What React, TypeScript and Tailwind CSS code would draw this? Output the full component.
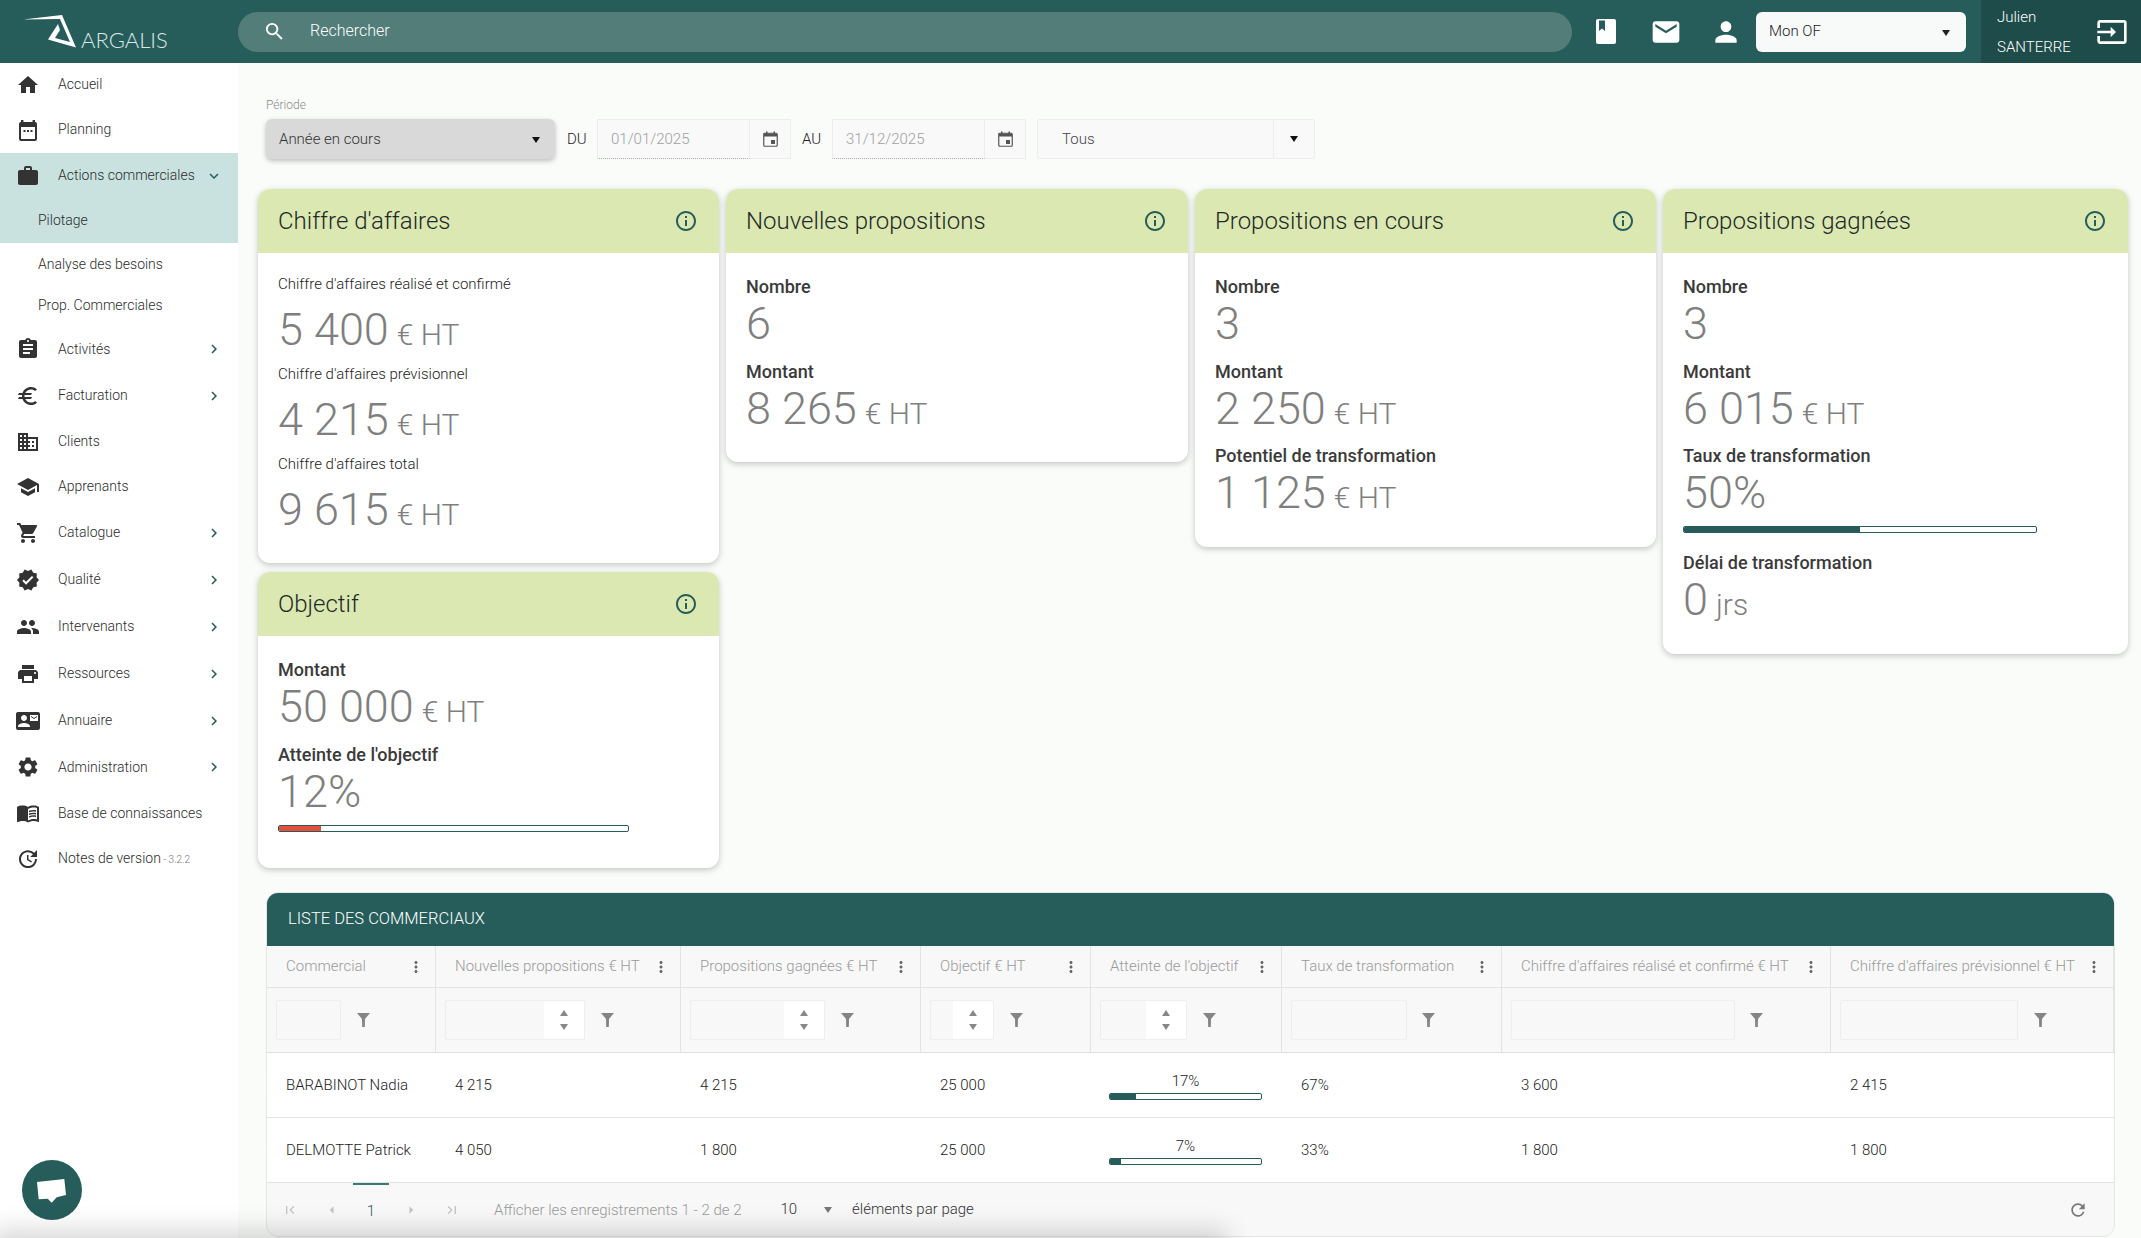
import React from "react";
import {
  MdHome, MdWork, MdAssignment, MdEuro, MdDomain, MdSchool, MdShoppingCart, MdVerified, MdPeople, MdPrint,
  MdContactMail, MdSettings, MdMenuBook, MdUpdate, MdEmail, MdPerson, MdInput, MdInfoOutline, MdSearch, MdMoreVert,
  MdChevronRight, MdExpandMore, MdRefresh, MdFirstPage, MdLastPage, MdArrowDropUp, MdArrowDropDown,
} from "react-icons/md";

const F = "font-['Roboto','Liberation_Sans',sans-serif]";

function PlanningIcon({ className = "" }: { className?: string }) {
  return (
    <svg width="24" height="24" viewBox="0 0 24 24" className={className}>
      <path d="M5 2h2.4v2h9.2V2H19v2h.2A2 2 0 0 1 21 6v15a2 2 0 0 1-2 2H5a2 2 0 0 1-2-2V6a2 2 0 0 1 2-2z" fill="currentColor" />
      <rect x="5" y="9" width="14" height="12" fill="#ffffff" />
      <rect x="7.5" y="12" width="2" height="2" fill="currentColor" />
      <rect x="11" y="12" width="2" height="2" fill="currentColor" />
      <rect x="14.5" y="12" width="2" height="2" fill="currentColor" />
    </svg>
  );
}

const menu: { label: string; Icon?: any; h: string; chev?: "r" | "d"; sub?: boolean; active?: boolean; extra?: string }[] = [
  { label: "Accueil", Icon: MdHome, h: "h-[43px]" },
  { label: "Planning", Icon: PlanningIcon, h: "h-[47px]" },
  { label: "Actions commerciales", Icon: MdWork, h: "h-[45px]", chev: "d", active: true },
  { label: "Pilotage", h: "h-[45px]", sub: true, active: true },
  { label: "Analyse des besoins", h: "h-[42px]", sub: true },
  { label: "Prop. Commerciales", h: "h-[41px]", sub: true },
  { label: "Activités", Icon: MdAssignment, h: "h-[46px]", chev: "r" },
  { label: "Facturation", Icon: MdEuro, h: "h-[47px]", chev: "r" },
  { label: "Clients", Icon: MdDomain, h: "h-[45px]" },
  { label: "Apprenants", Icon: MdSchool, h: "h-[45px]" },
  { label: "Catalogue", Icon: MdShoppingCart, h: "h-[47px]", chev: "r" },
  { label: "Qualité", Icon: MdVerified, h: "h-[47px]", chev: "r" },
  { label: "Intervenants", Icon: MdPeople, h: "h-[47px]", chev: "r" },
  { label: "Ressources", Icon: MdPrint, h: "h-[47px]", chev: "r" },
  { label: "Annuaire", Icon: MdContactMail, h: "h-[47px]", chev: "r" },
  { label: "Administration", Icon: MdSettings, h: "h-[46px]", chev: "r" },
  { label: "Base de connaissances", Icon: MdMenuBook, h: "h-[46px]" },
  { label: "Notes de version", Icon: MdUpdate, h: "h-[45px]", extra: "- 3.2.2" },
];

function Caret({ className = "" }: { className?: string }) {
  return (
    <svg width="8" height="6" viewBox="0 0 8 6" className={className}>
      <polygon points="0,0 8,0 4,6" fill="currentColor" />
    </svg>
  );
}

function Funnel() {
  return (
    <svg width="13" height="14" viewBox="0 0 13 14" className="shrink-0">
      <polygon points="0,0 13,0 8,6 7.8,14 5.2,14 5,6" fill="#858585" />
    </svg>
  );
}

function DateIcon() {
  return (
    <svg width="15" height="16" viewBox="0 0 15 16">
      <rect x="0.75" y="2.25" width="13.5" height="13" rx="1" fill="none" stroke="#555555" strokeWidth="1.2" />
      <rect x="1" y="2.5" width="13" height="3" fill="#555555" />
      <rect x="3" y="0.5" width="1.5" height="3" fill="#555555" />
      <rect x="10.5" y="0.5" width="1.5" height="3" fill="#555555" />
      <rect x="8" y="9" width="4" height="4" fill="#555555" />
    </svg>
  );
}

function BookIcon() {
  return (
    <svg width="20" height="25" viewBox="0 0 20 25">
      <rect width="20" height="25" rx="2" fill="#ffffff" />
      <polygon points="3,1.5 9,1.5 9,12 6,9.5 3,12" fill="#265d5b" />
    </svg>
  );
}

function Sidebar() {
  return (
    <aside className="w-[238px] shrink-0 bg-white relative">
      {menu.map((m) => (
        <div key={m.label} className={`${m.h} flex items-center relative ${m.active ? "bg-[#c9e2df]" : ""}`}>
          {m.Icon && <m.Icon className="absolute left-[16px] top-1/2 -translate-y-1/2 text-[#333333]" size={24} />}
          <span className={`${m.sub ? "ml-[38px]" : "ml-[58px]"} text-[14px] font-light text-[#2c2c2c] whitespace-nowrap`}>
            {m.label}
            {m.extra && <span className="text-[10px] text-[#777777]"> {m.extra}</span>}
          </span>
          {m.chev === "r" && <MdChevronRight className="absolute left-[205px] text-[#265d5b]" size={18} />}
          {m.chev === "d" && <MdExpandMore className="absolute left-[205px] text-[#265d5b]" size={18} />}
        </div>
      ))}
      <div className="absolute left-[22px] top-[1097px] w-[60px] h-[60px] rounded-full bg-[#265d5b] flex items-center justify-center">
        <svg width="30" height="26" viewBox="0 0 30 26">
          <polygon points="0,5 27.3,2 29,18 19.7,20.3 14.7,25.7 10.7,21.7 1.7,22.3" fill="#ffffff" />
        </svg>
      </div>
    </aside>
  );
}

function Header() {
  return (
    <header className="h-[63px] shrink-0 bg-[#265d5b] flex items-center text-white">
      <div className="w-[238px] shrink-0 h-full relative">
        <svg width="80" height="50" viewBox="0 0 80 50" className="absolute left-0 top-0">
          <polygon points="23,19.5 62,15 76,47.5 48,39.5 58,24 60,30 55,38 70,42 60,19" fill="#ffffff" />
        </svg>
        <span className="absolute left-[81px] top-[27px] font-['Lato',sans-serif] font-light text-[22px] leading-[26px] text-[#dbe8e6]">ARGALIS</span>
      </div>
      <div className="w-[1334px] h-[40px] rounded-[20px] bg-[#527d79] flex items-center pl-[25px]">
        <MdSearch size={23} className="text-white" />
        <span className="ml-[24px] -mt-[1px] text-[16px] font-light">Rechercher</span>
      </div>
      <div className="w-[50px] flex justify-end pr-[6px]"><BookIcon /></div>
      <div className="w-[60px] flex justify-end"><MdEmail size={32} /></div>
      <div className="w-[60px] flex justify-end"><MdPerson size={32} /></div>
      <div className="ml-[14px] w-[210px] h-[40px] rounded-[6px] bg-[#f8f9f9] flex items-center justify-between pl-[13px] pr-[16px] text-[#222222]">
        <span className="text-[15px] font-light">Mon OF</span>
        <Caret className="mt-[2px]" />
      </div>
      <div className="ml-[15px] flex-1 h-full bg-[#1e4c4a] flex items-center justify-between pl-[16px] pr-[13px]">
        <div className="text-[15px] font-light leading-[30px]">
          <div>Julien</div>
          <div>SANTERRE</div>
        </div>
        <MdInput size={32} />
      </div>
    </header>
  );
}

function DateField({ value }: { value: string }) {
  return (
    <div className="w-[194px] h-[40px] bg-[#f8f9f8] flex items-stretch">
      <div className="w-[153px] border border-[#ededed] border-b-[#aaaaaa] [border-bottom-style:dotted] flex items-center pl-[13px]">
        <span className="text-[15px] font-light text-[#a0a0a0]">{value}</span>
      </div>
      <div className="flex-1 border border-l-0 border-[#ededed] flex items-center justify-center">
        <DateIcon />
      </div>
    </div>
  );
}

function Filters() {
  return (
    <div>
      <div className="ml-[28px] mt-[1px] text-[12px] font-light text-[#8a8a8a] leading-[14px]">Période</div>
      <div className="flex items-center mt-[7px] ml-[28px] h-[40px]">
        <div className="w-[289px] h-[40px] rounded-[6px] bg-[#d9d9d9] shadow-[0_2px_5px_rgba(0,0,0,0.25)] flex items-center justify-between pl-[13px] pr-[15px] text-[#333333]">
          <span className="text-[15px] font-light">Année en cours</span>
          <Caret className="text-[#111111] mt-[2px]" />
        </div>
        <span className="ml-[12px] w-[30px] text-[15px] font-light text-[#222222]">DU</span>
        <DateField value="01/01/2025" />
        <span className="ml-[11px] w-[30px] text-[15px] font-light text-[#222222]">AU</span>
        <DateField value="31/12/2025" />
        <div className="ml-[11px] w-[278px] h-[40px] bg-[#f8f9f8] border border-[#eeeeee] rounded-[2px] flex items-stretch">
          <div className="flex-1 flex items-center pl-[24px] border-r border-[#eeeeee]">
            <span className="text-[15px] font-light text-[#444444]">Tous</span>
          </div>
          <div className="w-[40px] flex items-center justify-center">
            <Caret className="text-[#111111]" />
          </div>
        </div>
      </div>
    </div>
  );
}

function Card({ title, className, children }: { title: string; className: string; children: React.ReactNode }) {
  return (
    <div className={`${className} bg-white rounded-[12px] overflow-hidden shadow-[0_2px_6px_rgba(0,0,0,0.22)]`}>
      <div className="h-[64px] bg-[#dbe8b2] flex items-center justify-between pl-[20px] pr-[21px]">
        <span className="text-[24px] font-light text-[#1f2a28] whitespace-nowrap">{title}</span>
        <MdInfoOutline size={24} className="text-[#265d5b]" />
      </div>
      <div>{children}</div>
    </div>
  );
}

function Value({ n, unit = "€ HT", h }: { n: string; unit?: string; h: string }) {
  return (
    <div className={`${h} flex items-center text-[#7f7f7f] font-light whitespace-nowrap`}>
      <div className="flex items-baseline">
        <span className="text-[45px] leading-none">{n}</span>
        {unit && <span className="text-[30px] leading-none ml-[8px]">{unit}</span>}
      </div>
    </div>
  );
}

function Bold({ t }: { t: string }) {
  return <div className="text-[18px] font-medium text-[#3a3a3a] leading-[24px] whitespace-nowrap">{t}</div>;
}

function Small({ t }: { t: string }) {
  return <div className="text-[15px] font-light text-[#222222] leading-[20px] whitespace-nowrap">{t}</div>;
}

function Bar({ pct, color, w }: { pct: number; color: string; w: string }) {
  return (
    <div className={`${w} h-[7px] border border-[#265d5b] rounded-[2px] overflow-hidden bg-white`}>
      <div className="h-full" style={{ width: `${pct}%`, background: color }} />
    </div>
  );
}

const V50 = "h-[50px] pb-[2px]";

function Cards() {
  return (
    <div className="flex items-start gap-[7px] ml-[20px] mt-[30px]">
      <div className="w-[461px] flex flex-col gap-[9px]">
        <Card title="Chiffre d'affaires" className="h-[374px]">
          <div className="pl-[20px] pt-[21px]">
            <Small t="Chiffre d'affaires réalisé et confirmé" />
            <Value n="5 400" h="h-[70px]" />
            <Small t="Chiffre d'affaires prévisionnel" />
            <Value n="4 215" h="h-[70px]" />
            <Small t="Chiffre d'affaires total" />
            <Value n="9 615" h="h-[70px]" />
          </div>
        </Card>
        <Card title="Objectif" className="h-[296px]">
          <div className="pl-[20px] pt-[22px]">
            <Bold t="Montant" />
            <Value n="50 000" h={V50} />
            <div className="h-[11px]" />
            <Bold t="Atteinte de l'objectif" />
            <Value n="12%" unit="" h={V50} />
            <div className="h-[8px]" />
            <Bar pct={12} color="#e4503c" w="w-[351px]" />
          </div>
        </Card>
      </div>
      <Card title="Nouvelles propositions" className="w-[462px] h-[273px]">
        <div className="pl-[20px] pt-[22px]">
          <Bold t="Nombre" />
          <Value n="6" unit="" h={V50} />
          <div className="h-[11px]" />
          <Bold t="Montant" />
          <Value n="8 265" h={V50} />
        </div>
      </Card>
      <Card title="Propositions en cours" className="w-[461px] h-[358px]">
        <div className="pl-[20px] pt-[22px]">
          <Bold t="Nombre" />
          <Value n="3" unit="" h={V50} />
          <div className="h-[11px]" />
          <Bold t="Montant" />
          <Value n="2 250" h={V50} />
          <div className="h-[10px]" />
          <Bold t="Potentiel de transformation" />
          <Value n="1 125" h={V50} />
        </div>
      </Card>
      <Card title="Propositions gagnées" className="w-[465px] h-[465px]">
        <div className="pl-[20px] pt-[22px]">
          <Bold t="Nombre" />
          <Value n="3" unit="" h={V50} />
          <div className="h-[11px]" />
          <Bold t="Montant" />
          <Value n="6 015" h={V50} />
          <div className="h-[10px]" />
          <Bold t="Taux de transformation" />
          <Value n="50%" unit="" h={V50} />
          <div className="h-[8px]" />
          <Bar pct={50} color="#265d5b" w="w-[354px]" />
          <div className="h-[18px]" />
          <Bold t="Délai de transformation" />
          <Value n="0" unit="jrs" h={V50} />
        </div>
      </Card>
    </div>
  );
}

const cols = [
  { t: "Commercial", w: "w-[65px]", spin: false, gap: "ml-[16px]" },
  { t: "Nouvelles propositions € HT", w: "w-[140px]", spin: true, gap: "ml-[16px]" },
  { t: "Propositions gagnées € HT", w: "w-[135px]", spin: true, gap: "ml-[16px]" },
  { t: "Objectif € HT", w: "w-[64px]", spin: true, gap: "ml-[16px]" },
  { t: "Atteinte de l'objectif", w: "w-[87px]", spin: true, gap: "ml-[16px]" },
  { t: "Taux de transformation", w: "w-[116px]", spin: false, gap: "ml-[15px]" },
  { t: "Chiffre d'affaires réalisé et confirmé € HT", w: "w-[224px]", spin: false, gap: "ml-[15px]" },
  { t: "Chiffre d'affaires prévisionnel € HT", w: "w-[178px]", spin: false, gap: "ml-[16px]" },
];

const GRID = "grid grid-cols-[169px_245px_240px_170px_191px_220px_329px_283px]";

function Prog({ p }: { p: number }) {
  return (
    <div className="w-full pt-[2px]">
      <div className="text-center text-[15px] font-light text-[#222222] leading-[16px] mb-[4px]">{p}%</div>
      <Bar pct={p} color="#265d5b" w="w-full" />
    </div>
  );
}

function TableRow({ cells, pct }: { cells: string[]; pct: number }) {
  return (
    <div className={`${GRID} h-[65px] bg-white border-b border-[#e3e3e3]`}>
      {cells.map((c, i) => (
        <div key={i} className={`flex items-center ${i === 4 ? "pl-[18px] pr-[20px]" : "pl-[19px] pr-[8px]"} text-[15px] font-light text-[#222222] whitespace-nowrap`}>
          {i === 4 ? <Prog p={pct} /> : c}
        </div>
      ))}
    </div>
  );
}

function Table() {
  return (
    <div className="ml-[28px] mt-[24px] w-[1849px] h-[345px] rounded-[12px] overflow-hidden border border-[#e6e6e6] bg-[#f8f8f8]">
      <div className="h-[53px] bg-[#265d5b] flex items-center pl-[21px] text-[16.5px] font-light text-white">LISTE DES COMMERCIAUX</div>
      <div className={`${GRID} h-[42px] bg-[#f8f8f8] border-b border-[#e3e3e3]`}>
        {cols.map((c) => (
          <div key={c.t} className="flex items-center justify-between pl-[19px] pr-[10px] border-r border-[#e3e3e3] text-[15px] font-light text-[#9a9a9a] whitespace-nowrap">
            <span>{c.t}</span>
            <MdMoreVert size={18} className="text-[#666666] shrink-0" />
          </div>
        ))}
      </div>
      <div className={`${GRID} h-[65px] bg-[#f8f8f8] border-b border-[#dfdfdf]`}>
        {cols.map((c) => (
          <div key={c.t} className="flex items-center pl-[9px] border-r border-[#e3e3e3]">
            <div className={`${c.w} h-[40px] rounded-[2px] border border-[#eeeeee] flex justify-end overflow-hidden`}>
              {c.spin && (
                <div className="w-[40px] h-full bg-white flex flex-col items-center justify-center gap-[8px] text-[#888888]">
                  <Caret className="rotate-180" />
                  <Caret />
                </div>
              )}
            </div>
            <div className={c.gap}><Funnel /></div>
          </div>
        ))}
      </div>
      <TableRow cells={["BARABINOT Nadia", "4 215", "4 215", "25 000", "", "67%", "3 600", "2 415"]} pct={17} />
      <TableRow cells={["DELMOTTE Patrick", "4 050", "1 800", "25 000", "", "33%", "1 800", "1 800"]} pct={7} />
      <div className="h-[54px] flex items-center relative text-[15px] font-light">
        <MdFirstPage size={16} className="ml-[15px] text-[#c4c4c4]" />
        <MdArrowDropDown size={18} className="ml-[25px] rotate-90 text-[#c4c4c4]" />
        <div className="ml-[12px] w-[36px] h-full flex items-center justify-center text-[#265d5b] border-t-2 border-[#3c7a76]">1</div>
        <MdArrowDropUp size={18} className="ml-[13px] rotate-90 text-[#c4c4c4]" />
        <MdLastPage size={16} className="ml-[24px] text-[#c4c4c4]" />
        <span className="ml-[34px] text-[#9a9a9a]">Afficher les enregistrements 1 - 2 de 2</span>
        <span className="ml-[39px] text-[#333333] -mt-[2px]">10</span>
        <Caret className="ml-[27px] text-[#777777]" />
        <span className="ml-[20px] text-[#333333] -mt-[2px]">éléments par page</span>
        <MdRefresh size={20} className="ml-auto mr-[26px] text-[#777777]" />
      </div>
    </div>
  );
}

export default function App() {
  return (
    <div className={`${F} w-[2141px] h-[1238px] overflow-hidden flex flex-col bg-[#fafcfa] relative`}>
      <Header />
      <div className="flex flex-1">
        <Sidebar />
        <main className="flex-1 pt-[34px]">
          <Filters />
          <Cards />
          <Table />
        </main>
      </div>
      <div className="absolute left-0 bottom-[-18px] w-[1220px] h-[18px] shadow-[0_0_26px_8px_rgba(0,0,0,0.16)] pointer-events-none" />
    </div>
  );
}
